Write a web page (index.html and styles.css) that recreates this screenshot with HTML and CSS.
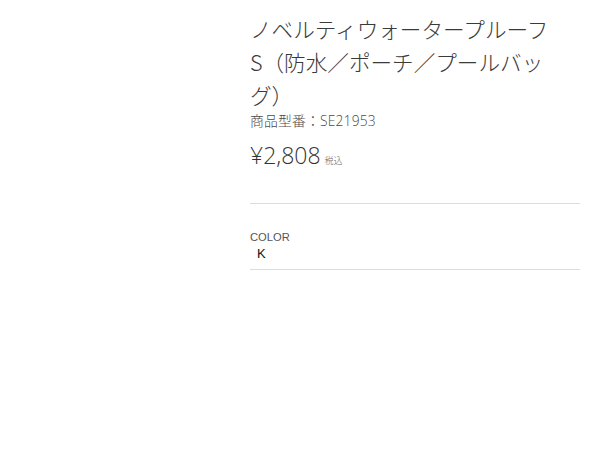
FILE: index.html
```html
<!DOCTYPE html>
<html lang="ja">
<head>
<meta charset="utf-8">
<link rel="stylesheet" href="styles.css">
</head>
<body>
<div class="product">
  <h1 class="title">ノベルティウォータープルーフS（防水／ポーチ／プールバッグ）</h1>
  <p class="code">商品型番：SE21953</p>
  <p class="price">¥2,808<span class="tax">税込</span></p>
  <div class="color-box">
    <div class="color-label">COLOR</div>
    <div class="color-value">K</div>
  </div>
</div>
</body>
</html>
```
FILE: styles.css
```css
html, body {
  margin: 0;
  padding: 0;
  background: #fff;
}
body {
  font-family: "Noto Sans CJK JP", "Liberation Sans", sans-serif;
  color: #333;
}
.product {
  margin-left: 250px;
  width: 330px;
  padding-top: 12px;
}
.title {
  margin: 0;
  width: 310px;
  font-size: 21.6px;
  line-height: 33px;
  font-weight: 300;
  color: #3a3a3a;
}
.code {
  margin: 1px 0 0;
  font-family: "Open Sans", "Noto Sans CJK JP", sans-serif;
  font-size: 13.8px;
  line-height: 18px;
  color: #4a4a4a;
  font-weight: 300;
  letter-spacing: 0.2px;
}
.price {
  margin: 10px 0 0;
  font-family: "Open Sans", "Noto Sans CJK JP", sans-serif;
  font-size: 23px;
  line-height: 30px;
  color: #333;
  font-weight: 300;
}
.tax {
  font-family: "Noto Sans CJK JP", sans-serif;
  font-size: 9px;
  margin-left: 4px;
  color: #666;
}
.color-box {
  margin-top: 27px;
  border-top: 1px solid #d8dde0;
  border-bottom: 1px solid #d8dde0;
  padding: 25px 0 6px;
}
.color-label {
  font-family: "Liberation Sans", sans-serif;
  font-size: 11.2px;
  line-height: 16px;
  color: #555;
}
.color-value {
  font-family: "Liberation Sans", sans-serif;
  font-size: 13px;
  line-height: 18px;
  color: #111;
  padding-left: 7px;
}
```
